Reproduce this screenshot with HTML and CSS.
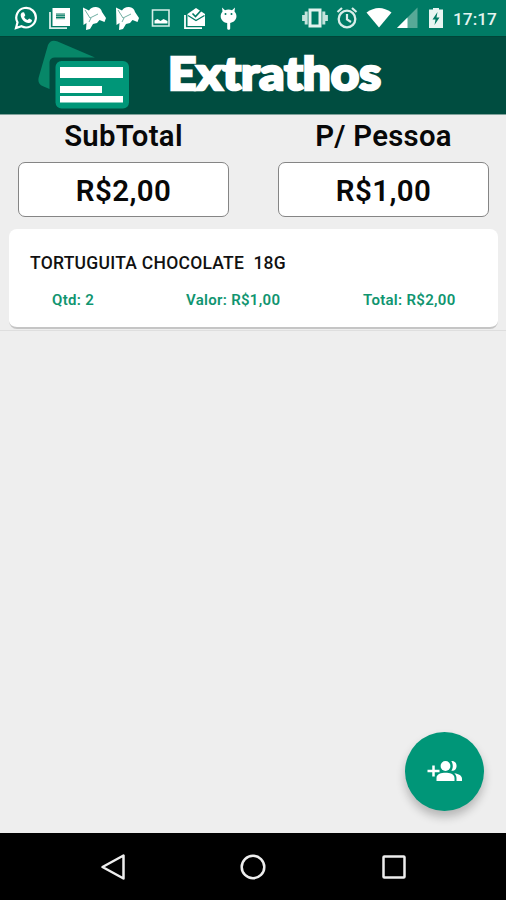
FILE: index.html
```
<!DOCTYPE html>
<html lang="pt-BR">
<head>
<meta charset="utf-8">
<title>Extrathos</title>
<link rel="stylesheet" href="styles.css">
</head>
<body>
<div class="screen">
  <div class="status">
    <div class="notifications">
      <svg viewBox="0 0 24 24"><path d="M2 22l1.500-5.600A9.800 9.800 0 1 1 7.500 20.300z" fill="none" stroke="#fff" stroke-width="2.200"/><path d="M8 6.500l2-.3 1.300 3-1.200 1.700c.8 1.500 1.900 2.500 3.500 3.200l1.500-1.500 2.900 1.500c0 2-1.500 3.200-3.500 3C10.500 16.500 7 13 6.700 9.200c0-1.200.5-2 1.300-2.700z" fill="#fff"/></svg>
      <svg viewBox="0 0 24 24"><path d="M4.500 2H22v18H4.500zM8 7.500v5.500h9V7.500z" fill="#fff" fill-rule="evenodd"/><path d="M8 8h9M8 10.300h9M8 12.600h9" stroke="#8abfb2" stroke-width="1.300"/><path d="M2 6v16.200h17" fill="none" stroke="#d8eee9" stroke-width="1.800"/></svg>
      <svg viewBox="0 0 24 24"><path d="M1 1.500l6 3Q9 .8 14 1q5 .5 6 5l4 6-1.500 4-5-2-2.500 3-4 1-3 5-4 1 .5-7-3 2z" fill="#fff"/><path d="M3 4l5 8 8-4M9 12l-2 4" stroke="#4c9b8b" fill="none" stroke-width=".8"/></svg>
      <svg viewBox="0 0 24 24"><path d="M1 1.500l6 3Q9 .8 14 1q5 .5 6 5l4 6-1.500 4-5-2-2.500 3-4 1-3 5-4 1 .5-7-3 2z" fill="#fff"/><path d="M3 4l5 8 8-4M9 12l-2 4" stroke="#4c9b8b" fill="none" stroke-width=".8"/></svg>
      <svg viewBox="0 0 24 24"><path d="M3.500 4h16.500v16H3.500z" fill="none" stroke="#d5eee8" stroke-width="1.600"/><path d="M5.500 17.500v-3l3-1.500 3 2 3-2 4 2v2.500z" fill="#fff"/></svg>
      <svg viewBox="0 0 24 24"><path d="M2 9v13.200h17" fill="none" stroke="#fff" stroke-width="1.800"/><path d="M4.500 8L13 2l9 6v12H4.500z" fill="#fff"/><path d="M5 9.500l8 5 8.500-5" fill="none" stroke="#007b65" stroke-width="1.300"/><path d="M9.500 7.500l3 3L19 3.500" fill="none" stroke="#007b65" stroke-width="1.600"/></svg>
      <svg viewBox="0 0 24 24"><path d="M5 1.500l3 2.700a10 10 0 0 1 7 0l3-2.700-.5 4c4 4.500 1.500 10.500-4.300 11.500v5.500c0 1.700-3 1.700-3 0V17C4 16 1.800 10 5.500 5.500z" fill="#fff"/><circle cx="8.500" cy="8" r="1" fill="#007b65"/><circle cx="14.500" cy="8" r="1" fill="#007b65"/></svg>
    </div>
    <div class="system">
      <svg viewBox="0 0 28 24"><path d="M9 4h10v16H9z" fill="none" stroke="#e2f2ee" stroke-width="3"/><path d="M5.200 5.500v13M22.800 5.500v13M2.600 9v6M25.400 9v6" stroke="#c4e3dc" stroke-width="3"/></svg>
      <svg viewBox="0 0 28 24"><circle cx="14" cy="13" r="8.300" fill="none" stroke="#d9eee9" stroke-width="2.300"/><path d="M14 8v5.500l4 2.500M4.500 6L9 2M19 2l4.500 4" fill="none" stroke="#d9eee9" stroke-width="2.200"/></svg>
      <svg viewBox="0 0 28 24"><path d="M1.500 6.500Q14-2.500 26.500 6.500L14 21.500z" fill="#fff"/></svg>
      <svg viewBox="0 0 28 24"><path d="M23.500 1.500V22H3z" fill="#57a997"/><path d="M13.500 11.500V22H3z" fill="#fff"/></svg>
      <svg viewBox="0 0 28 24"><path d="M6 3.500h4V2h6v1.500h4V22H6z" fill="#e8f5f2"/><path d="M14.500 6l-5 7.500h3L11.500 19l5-7.500h-3z" fill="#007b65"/></svg>
    </div>
    <span class="clock">17:17</span>
  </div>
  <header class="header">
    <svg class="logo" viewBox="0 0 94 78" aria-hidden="true"><path d="M57 21.500L19 5.300Q12.500 3.200 10 9L.8 41Q-1 48 5 50.200L11.500 53V26Q12 21.500 17 21.500z" fill="#078768"/><rect x="17.500" y="25" width="73.500" height="47.500" rx="6" fill="#009678"/><path d="M22 31h63v11H22zM22 50h42v7H22zM22 60h63v6.500H22z" fill="#fff"/></svg>
    <svg class="brand" viewBox="0 0 220 72"><text x="1" y="51" textLength="213" lengthAdjust="spacingAndGlyphs">Extrathos</text></svg>
  </header>
  <main class="content">
    <section class="totals">
      <div class="total"><h2>SubTotal</h2><div class="amount">R$2,00</div></div>
      <div class="total"><h2>P/ Pessoa</h2><div class="amount">R$1,00</div></div>
    </section>
    <section class="list">
      <article class="card">
        <h3>TORTUGUITA CHOCOLATE&nbsp; 18G</h3>
        <div class="details"><span>Qtd: 2</span><span>Valor: R$1,00</span><span>Total: R$2,00</span></div>
      </article>
    </section>
    <button class="fab" aria-label="Adicionar pessoa"><svg viewBox="0 0 36 24"><path d="M.5 12h12M6.500 6.500v11" stroke="#fff" stroke-width="2.500"/><circle cx="18.500" cy="7" r="4.900" fill="#fff"/><path d="M9.500 22v-3c0-4 5-5.200 9-5.200s9 1.200 9 5.200v3zM24.300 2c7-1 7 10.800 0 9.800 2-3 2-6.500 0-9.800zM27.300 14.200c4.500.6 7.700 2.300 7.700 5.500V22h-5.500v-3c0-2-.8-3.500-2.200-4.800z" fill="#fff"/></svg></button>
  </main>
  <nav class="navbar">
    <svg viewBox="0 0 28 28"><path d="M24.500 2.500v23L3.500 14z"/></svg>
    <svg viewBox="0 0 28 28"><circle cx="14" cy="14" r="11.300"/></svg>
    <svg viewBox="0 0 28 28"><rect x="3.500" y="3.500" width="21" height="21" rx=".8"/></svg>
  </nav>
</div>
</body>
</html>
```
FILE: styles.css
```
* { box-sizing: border-box; }
body { margin: 0; font-family: Roboto, "Liberation Sans", sans-serif; }
.screen { width: 506px; height: 900px; display: flex; flex-direction: column; background: #eee; overflow: hidden; }
.status { height: 36px; background: #007b65; display: flex; align-items: center; padding: 0 10px 0 14px; }
.notifications { display: flex; gap: 9.8px; }
.notifications svg { width: 24px; height: 24px; }
.system { display: grid; grid-template-columns: 32px 32px 29px 29px 28px; margin-left: auto; }
.system svg { width: 28px; height: 24px; }
.clock { color: #e5f4f0; font-size: 17.3px; font-weight: 500; line-height: 24px; width: 43px; margin-left: 2px; white-space: nowrap; padding-top: 1px; }
.header { height: 79px; background: #004d40; border-top: 1px solid #004538; border-bottom: 1px solid #80a29b; display: flex; align-items: flex-start; padding-left: 38px; }
.logo { width: 94px; height: 78px; margin-top: -1px; }
.brand { width: 220px; height: 72px; margin: 2px 0 0 35px; overflow: visible; }
.brand text { font: 900 46px Lato, sans-serif; fill: #fff; stroke: #fff; stroke-width: 2.6px; stroke-linejoin: miter; }
.content { flex: 1; display: flex; flex-direction: column; }
.totals { display: grid; grid-template-columns: 211px 211px; gap: 49px; padding-left: 18px; height: 114px; }
.total { padding-top: 3px; text-align: center; }
.total h2 { margin: 0; height: 44px; font-size: 29.3px; line-height: 37px; font-weight: 600; letter-spacing: .3px; color: #080808; white-space: nowrap; }
.amount { height: 55px; border: 1px solid #858585; border-radius: 7px; background: #fff; font-size: 29.5px; line-height: 56px; font-weight: 600; letter-spacing: .4px; color: #080808; }
.list { height: 102px; padding: 0 8px 0 9px; border-bottom: 1px solid #dedede; }
.card { height: 100px; border-radius: 8px; background: #fff; border-bottom: 2px solid #c5c5c5; padding: 23px 0 0 21px; }
.card h3 { margin: 0; font-size: 17.5px; line-height: 23px; font-weight: 500; letter-spacing: .26px; color: #111; white-space: nowrap; }
.details { display: grid; grid-template-columns: 134px 177px auto; padding-left: 22px; margin-top: 16px; color: #109570; font-size: 15px; line-height: 18px; font-weight: 600; letter-spacing: .3px; white-space: nowrap; }
.fab { width: 79px; height: 79px; border: 0; padding: 0; border-radius: 50%; background: #009678; display: flex; align-items: center; justify-content: center; align-self: flex-end; margin: auto 22px 22.5px 0; box-shadow: 0 6px 10px rgba(0,0,0,.24); }
.fab svg { width: 36px; height: 24px; }
.navbar { height: 67px; background: #000; display: flex; justify-content: center; align-items: center; gap: 112.5px; }
.navbar svg { width: 28px; height: 28px; fill: none; stroke: #eee; stroke-width: 2.5; stroke-linejoin: round; }
```
